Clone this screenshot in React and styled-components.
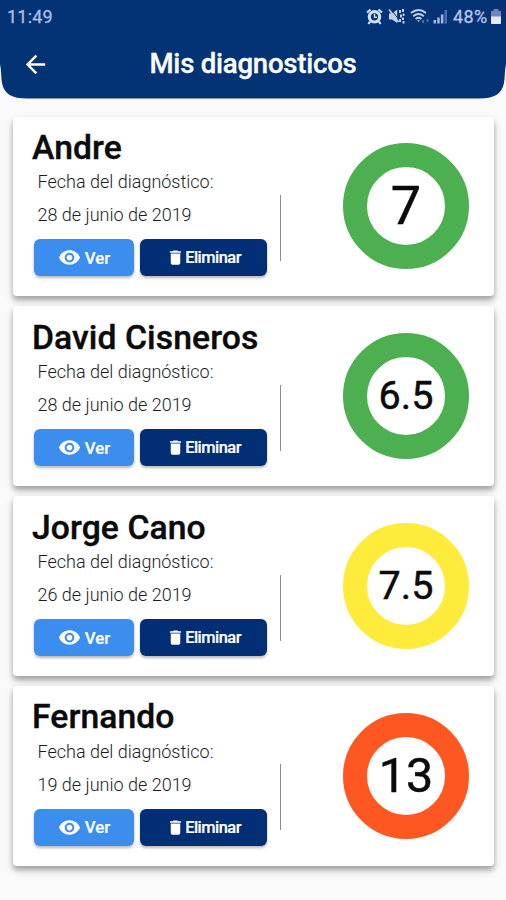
import React from 'react';
import styled, { createGlobalStyle } from 'styled-components';
import { MdArrowBack, MdVisibility, MdDelete } from 'react-icons/md';

const GlobalStyle = createGlobalStyle`
  * {
    box-sizing: border-box;
  }

  body {
    margin: 0;
    background: #fafafa;
    font-family: Roboto, sans-serif;
  }
`;

const Screen = styled.div`
  display: flex;
  flex-direction: column;
  height: 900px;
  overflow: hidden;
`;

const Header = styled.header`
  flex: none;
  height: 98.5px;
  background: #033375;
  clip-path: path('M0 0 H506 V64 C504.5 71 505 78 504 83 C502 94 494 98.5 479 98.5 H27 C12 98.5 4 94 2 83 C1 78 1.5 71 0 64 Z');
`;

const StatusBar = styled.div`
  display: flex;
  align-items: center;
  justify-content: space-between;
  height: 32px;
  padding: 0 4px 0 7px;
  color: #a9bdea;
`;

const Clock = styled.span`
  font-size: 18px;
  letter-spacing: 0.2px;
  -webkit-text-stroke: 0.3px;
`;

const StatusIcons = styled.div`
  display: flex;
  align-items: center;

  svg {
    display: block;
  }
`;

const Gap = styled.span`
  width: ${(p) => p.$size}px;
`;

const Battery = styled.span`
  margin: 0 2.5px 0 4.5px;
  font-size: 18px;
  letter-spacing: 0.4px;
  color: #b5c6ec;
  -webkit-text-stroke: 0.3px;
`;

const TitleBar = styled.div`
  display: grid;
  grid-template-columns: 28px 1fr 28px;
  align-items: center;
  height: 64px;
  padding: 0 21px;
  color: #fff;

  svg {
    display: block;
  }
`;

const Title = styled.h1`
  margin: 0;
  font-size: 27.6px;
  line-height: 32px;
  font-weight: 500;
  letter-spacing: -0.25px;
  text-align: center;
  -webkit-text-stroke: 0.3px;
`;

const List = styled.main`
  display: flex;
  flex-direction: column;
  gap: 10.5px;
  padding: 18px 12px 0 13px;
`;

const Card = styled.article`
  display: flex;
  height: 179.4px;
  background: #fff;
  border-radius: 4px;
  box-shadow: 0 4px 5px rgba(0, 0, 0, 0.24), 0 4px 9px rgba(0, 0, 0, 0.16);
`;

const Info = styled.div`
  width: 267px;
  padding: 11.3px 0 0 19px;
`;

const Name = styled.h2`
  margin: 0;
  font-size: 33.7px;
  line-height: 40px;
  font-weight: 500;
  letter-spacing: 0.08px;
  color: #0b0b0b;
  -webkit-text-stroke: 0.4px;
`;

const Line = styled.p`
  margin: 0;
  padding-left: 5.5px;
  font-size: 18px;
  line-height: 33px;
  font-weight: 300;
  color: #1c1c1c;
  white-space: nowrap;

  ${Name} + & {
    margin-top: -2.5px;
  }
`;

const Actions = styled.div`
  display: flex;
  gap: 6px;
  margin-top: 8.2px;
  padding-left: 1.5px;
`;

const Button = styled.button`
  display: flex;
  align-items: center;
  justify-content: center;
  gap: ${(p) => p.$gap}px;
  width: ${(p) => p.$width}px;
  height: 36.5px;
  padding: 0;
  border: 0;
  border-radius: 6px;
  background: ${(p) => p.$color};
  box-shadow: 0 2px 3px rgba(0, 0, 0, 0.28);
  color: #fff;
  font-family: inherit;
  font-size: ${(p) => p.$size}px;
  font-weight: 500;
  letter-spacing: ${(p) => p.$spacing || 0}px;
  -webkit-text-stroke: 0.2px;

  svg {
    flex: none;
    -webkit-text-stroke: 0;
  }
`;

const Divider = styled.div`
  width: 1.4px;
  height: 66px;
  margin-top: 78.3px;
  background: #8d8d8d;
`;

const Score = styled.div`
  display: flex;
  align-items: center;
  justify-content: center;
  width: 126.5px;
  height: 126.5px;
  margin: 26.4px 24.8px 0 auto;
  border: 24.5px solid ${(p) => p.$color};
  border-radius: 50%;
  font-size: ${(p) => p.$size}px;
  line-height: 1;
  color: #0b0b0b;
  -webkit-text-stroke: 0.5px;
`;

const diagnoses = [
  { name: 'Andre', date: '28 de junio de 2019', score: '7', color: '#4caf50', size: 54 },
  { name: 'David Cisneros', date: '28 de junio de 2019', score: '6.5', color: '#4caf50', size: 39.5 },
  { name: 'Jorge Cano', date: '26 de junio de 2019', score: '7.5', color: '#ffeb3b', size: 39.5 },
  { name: 'Fernando', date: '19 de junio de 2019', score: '13', color: '#ff5722', size: 48.5 },
];

function AlarmIcon() {
  return (
    <svg width="17" height="17" viewBox="0 0 17 17" fill="none" stroke="#d3def6" strokeWidth="2.2">
      <path d="M1 4.5 L4.5 1.5 M16 4.5 L12.5 1.5 M4 13.5 L2.5 16 M13 13.5 L14.5 16" />
      <circle cx="8.5" cy="8.8" r="5.2" strokeWidth="3.2" />
      <path d="M8.5 6 V9.2 H11" strokeWidth="1.4" />
    </svg>
  );
}

function MuteVibrateIcon() {
  return (
    <svg width="17" height="17" viewBox="0 0 17 17" fill="#c3d1f0">
      <path d="M1 5.5 H4 L9.2 1.5 V15 L4 11.5 H1 Z" />
      <path d="M2.5 1 L11 11.5" stroke="#033375" strokeWidth="1" />
      <path d="M1 1.5 L10.5 14" stroke="#c3d1f0" strokeWidth="1.6" />
      <path d="M11 2 H13 V5 H11 Z M12 6.5 H14 V9.5 H12 Z M11 11 H13 V14 H11 Z M14 1 H16 V4 H14 Z M14.7 5.5 H16.5 V8 H14.7 Z M14 9.5 H16 V12 H14 Z M14.5 13 H16.5 V15.5 H14.5 Z" />
    </svg>
  );
}

function WifiIcon() {
  return (
    <svg width="21" height="17" viewBox="0 0 21 17" fill="none" stroke="#c3d1f0" strokeWidth="1.9">
      <path d="M1 5 Q8.5 -1 16 5 M3.2 8.2 Q8.5 4 13.8 8.2 M5.6 11 Q8.5 8.6 11.4 11" />
      <path d="M7 12.2 H10 L8.5 14 Z" fill="#c3d1f0" stroke="none" />
      <path d="M13 12 V15 M17.5 11 V14" stroke="#4d6fa8" strokeWidth="2" />
    </svg>
  );
}

function SignalIcon() {
  return (
    <svg width="15" height="17" viewBox="0 0 15 17">
      <path d="M0.5 12 H3 V15.5 H0.5 Z M4.2 9.5 H6.7 V15.5 H4.2 Z M7.9 6.5 H10.4 V15.5 H7.9 Z" fill="#a5b8df" />
      <path d="M11.5 2 H14 V15.5 H11.5 Z" fill="#4d6fa8" />
    </svg>
  );
}

function BatteryIcon() {
  return (
    <svg width="12" height="17" viewBox="0 0 12 17">
      <path d="M3.5 1 H8.5 V3 H11 V9 H1 V3 H3.5 Z" fill="#6d88b8" />
      <path d="M1 8.5 H11 V15 Q11 16 10 16 H2 Q1 16 1 15 Z" fill="#e3eafa" />
    </svg>
  );
}

function DiagnosisCard({ name, date, score, color, size }) {
  return (
    <Card>
      <Info>
        <Name>{name}</Name>
        <Line>Fecha del diagnóstico:</Line>
        <Line>{date}</Line>
        <Actions>
          <Button $width={100.8} $gap={4} $size={16.8} $color="#3b8eed">
            <MdVisibility size={23} />
            Ver
          </Button>
          <Button $width={126.5} $gap={0} $size={16.4} $spacing={-0.5} $color="#012e74">
            <MdDelete size={19} />
            Eliminar
          </Button>
        </Actions>
      </Info>
      <Divider />
      <Score $color={color} $size={size}>{score}</Score>
    </Card>
  );
}

export default function App() {
  return (
    <Screen>
      <GlobalStyle />
      <Header>
        <StatusBar>
          <Clock>11:49</Clock>
          <StatusIcons>
            <AlarmIcon />
            <Gap $size={5} />
            <MuteVibrateIcon />
            <Gap $size={5} />
            <WifiIcon />
            <Gap $size={2} />
            <SignalIcon />
            <Battery>48%</Battery>
            <BatteryIcon />
          </StatusIcons>
        </StatusBar>
        <TitleBar>
          <MdArrowBack size={29} />
          <Title>Mis diagnosticos</Title>
        </TitleBar>
      </Header>
      <List>
        {diagnoses.map((item) => (
          <DiagnosisCard key={item.name} {...item} />
        ))}
      </List>
    </Screen>
  );
}
